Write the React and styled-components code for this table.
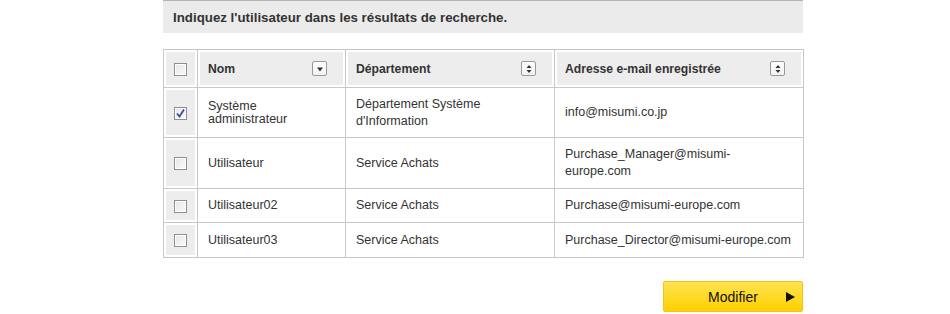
import React, { useState } from 'react';
import styled, { createGlobalStyle } from 'styled-components';

const GlobalStyle = createGlobalStyle`
  body {
    margin: 0;
    background: #fff;
    font-family: "Liberation Sans", Arial, sans-serif;
    color: #333;
  }
`;

const users = [
  { id: 1, name: 'Système administrateur', dept: 'Département Système d\'Information', email: 'info@misumi.co.jp', checked: true, h: 50 },
  { id: 2, name: 'Utilisateur', dept: 'Service Achats', email: 'Purchase_Manager@misumi-europe.com', checked: false, h: 51 },
  { id: 3, name: 'Utilisateur02', dept: 'Service Achats', email: 'Purchase@misumi-europe.com', checked: false, h: 34 },
  { id: 4, name: 'Utilisateur03', dept: 'Service Achats', email: 'Purchase_Director@misumi-europe.com', checked: false, h: 35 },
];

function Checkbox({ checked }) {
  return (
    <Box>
      {checked && (
        <svg width="11" height="11" viewBox="0 0 11 11">
          <path d="M2 5.5 L4.5 8.5 L9 1.5" fill="none" stroke="#3b4f9c" strokeWidth="1.8" />
        </svg>
      )}
    </Box>
  );
}

function SortButton({ both }) {
  return (
    <Sorter>
      <svg width="8" height="10" viewBox="0 0 8 10">
        {both ? (
          <>
            <path d="M1.5 4 L4 1 L6.5 4 Z" fill="#333" />
            <path d="M1.5 6 L4 9 L6.5 6 Z" fill="#333" />
          </>
        ) : (
          <path d="M1 3.5 L7 3.5 L4 7.5 Z" fill="#333" />
        )}
      </svg>
    </Sorter>
  );
}

function App() {
  const [rows] = useState(users);
  return (
    <Page>
      <GlobalStyle />
      <Notice>Indiquez l'utilisateur dans les résultats de recherche.</Notice>
      <Table>
        <colgroup>
          <col style={{ width: 34 }} />
          <col style={{ width: 148 }} />
          <col style={{ width: 209 }} />
          <col style={{ width: 249 }} />
        </colgroup>
        <thead>
          <tr>
            <CheckHead><Checkbox /></CheckHead>
            <Head><HeadInner>Nom<SortButton /></HeadInner></Head>
            <Head><HeadInner>Département<SortButton both /></HeadInner></Head>
            <Head><HeadInner>Adresse e-mail enregistrée<SortButton both /></HeadInner></Head>
          </tr>
        </thead>
        <tbody>
          {rows.map(u => (
            <Row key={u.id} $h={u.h}>
              <CheckCell><Checkbox checked={u.checked} /></CheckCell>
              <NameCell>{u.name}</NameCell>
              <Cell>{u.dept}</Cell>
              <Cell>{u.email}</Cell>
            </Row>
          ))}
        </tbody>
      </Table>
      <Actions>
        <PrimaryButton>
          Modifier
          <Arrow />
        </PrimaryButton>
      </Actions>
    </Page>
  );
}

const Page = styled.div`
  width: 640px;
  margin-left: 163px;
`;

const Notice = styled.div`
  height: 33px;
  box-sizing: border-box;
  border-top: 1px solid #b4b4b4;
  background: #ebebeb;
  padding: 0 10px;
  display: flex;
  align-items: center;
  font-size: 13.3px;
  font-weight: bold;
  color: #333;
`;

const Table = styled.table`
  margin-top: 16px;
  width: 640px;
  table-layout: fixed;
  border-collapse: collapse;
  border: 1px solid #c8c8c8;
  font-size: 12.5px;
  td, th {
    border: 1px solid #c8c8c8;
  }
`;

const Head = styled.th`
  height: 37px;
  padding: 0;
  background: #ededed;
  box-shadow: inset 0 0 0 2px #fff;
  text-align: left;
  font-size: 12.2px;
  font-weight: bold;
  color: #333;
`;

const HeadInner = styled.div`
  display: flex;
  align-items: center;
  justify-content: space-between;
  padding: 0 18px 0 10px;
`;

const CheckHead = styled(Head)`
  text-align: center;
`;

const Sorter = styled.span`
  width: 13px;
  height: 13px;
  border: 1px solid #999;
  border-radius: 2px;
  background: linear-gradient(#fff, #f2f2f2);
  display: flex;
  align-items: center;
  justify-content: center;
`;

const Row = styled.tr`
  height: ${p => p.$h}px;
`;

const Cell = styled.td`
  padding: 0 10px;
  line-height: 17px;
  color: #333;
  vertical-align: middle;
`;

const NameCell = styled(Cell)`
  line-height: 13px;
`;

const CheckCell = styled.td`
  padding: 0;
  text-align: center;
  background: #ededed;
  box-shadow: inset 0 0 0 2px #fff;
`;

const Box = styled.span`
  display: inline-flex;
  align-items: center;
  justify-content: center;
  vertical-align: middle;
  width: 11px;
  height: 11px;
  border: 1px solid #8f8f8f;
  background: linear-gradient(135deg, #e6e6e6, #fafafa);
  box-shadow: inset 0 0 0 1px #fff;
`;

const Actions = styled.div`
  display: flex;
  justify-content: flex-end;
  margin-top: 23px;
`;

const PrimaryButton = styled.button`
  position: relative;
  width: 140px;
  height: 31px;
  border: 1px solid #f0c419;
  border-radius: 2px;
  background: linear-gradient(#ffe350, #ffd000);
  font-family: "Liberation Sans", Arial, sans-serif;
  font-size: 14px;
  color: #111;
  padding: 0;
  display: flex;
  align-items: center;
  justify-content: center;
  cursor: pointer;
`;

const Arrow = styled.span`
  position: absolute;
  right: 7px;
  top: 50%;
  margin-top: -5px;
  width: 0;
  height: 0;
  border-top: 5px solid transparent;
  border-bottom: 5px solid transparent;
  border-left: 9px solid #111;
`;

export default App;
